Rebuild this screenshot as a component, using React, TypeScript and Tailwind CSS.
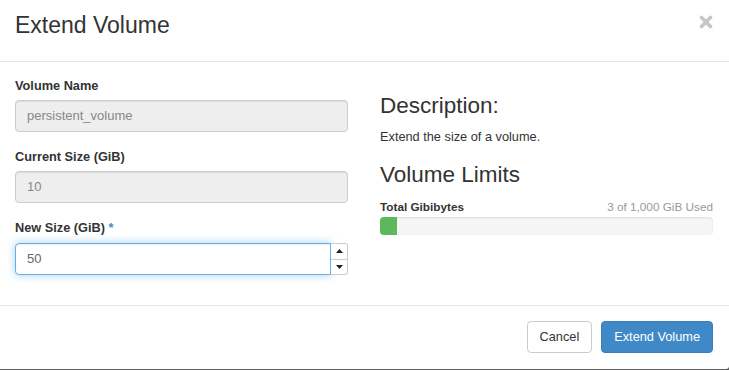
export default function App() {
  return (
    <div className="h-[370px] w-[729px] overflow-hidden bg-[#5e5e5e] font-['Liberation_Sans',Arial,sans-serif] text-[#333]">
      <div className="flex h-[369px] flex-col rounded-br-[3px] bg-white">
        {/* Header */}
        <div className="flex h-[62px] shrink-0 items-start justify-between border-b border-[#e5e5e5] pl-[15px] pr-[16px] pt-[13px]">
          <h4 className="text-[23px] font-normal leading-[25px]">Extend Volume</h4>
          <button className="mt-[2px] h-[14px] w-[14px]" aria-label="Close">
            <svg width="14" height="14" viewBox="0 0 14 14">
              <path d="M2.5 2.5 L11.5 11.5 M11.5 2.5 L2.5 11.5" stroke="#c6c6c6" strokeWidth="3.6" strokeLinecap="round" />
            </svg>
          </button>
        </div>

        {/* Body */}
        <div className="flex shrink-0 gap-[32px] px-[15px] pb-[15px] pt-[15px]">
          <div className="flex w-[333px] flex-col">
            <div className="mb-[16px]">
              <label className="mb-[6px] block text-[12.75px] font-bold leading-[17px]">Volume Name</label>
              <div className="flex h-[32px] items-center rounded-[4px] border border-[#ccc] bg-[#eee] px-[11px] text-[13px] text-[#888] shadow-[inset_0_1px_1px_rgba(0,0,0,0.075)]">
                persistent_volume
              </div>
            </div>
            <div className="mb-[16px]">
              <label className="mb-[6px] block text-[12.75px] font-bold leading-[17px]">Current Size (GiB)</label>
              <div className="flex h-[32px] items-center rounded-[4px] border border-[#ccc] bg-[#eee] px-[11px] text-[13px] text-[#888] shadow-[inset_0_1px_1px_rgba(0,0,0,0.075)]">
                10
              </div>
            </div>
            <div className="mb-[15px]">
              <label className="mb-[7px] block text-[12.75px] font-bold leading-[17px]">
                New Size (GiB) <span className="text-[#428bca]">*</span>
              </label>
              <div className="flex h-[32px]">
                <div className="flex flex-1 items-center rounded-l-[4px] border border-[#66afe9] bg-white px-[11px] text-[13px] text-[#666] shadow-[inset_0_1px_1px_rgba(0,0,0,0.075),0_0_8px_rgba(102,175,233,0.6)]">
                  50
                </div>
                <div className="flex w-[17px] flex-col rounded-r-[3px] border border-l-0 border-[#ccc] bg-white">
                  <div className="flex flex-1 items-center justify-center border-b border-[#ccc]">
                    <svg width="7" height="4" viewBox="0 0 7 4"><path d="M3.5 0 L7 4 L0 4 Z" fill="#222" /></svg>
                  </div>
                  <div className="flex flex-1 items-center justify-center">
                    <svg width="7" height="4" viewBox="0 0 7 4"><path d="M0 0 L7 0 L3.5 4 Z" fill="#222" /></svg>
                  </div>
                </div>
              </div>
            </div>
          </div>

          <div className="flex w-[333px] flex-col">
            <h3 className="mt-[16px] text-[22.5px] font-normal leading-[25px]">Description:</h3>
            <p className="mt-[10px] text-[12.75px] leading-[18px]">Extend the size of a volume.</p>
            <h3 className="mt-[16px] text-[22.5px] font-normal leading-[25px]">Volume Limits</h3>
            <div className="mt-[12px] flex justify-between text-[11.75px] leading-[16px]">
              <span className="font-bold">Total Gibibytes</span>
              <span className="text-[#999]">3 of 1,000 GiB Used</span>
            </div>
            <div className="mt-[2px] h-[18px] overflow-hidden rounded-[4px] bg-[#f5f5f5] shadow-[inset_0_1px_2px_rgba(0,0,0,0.1)]">
              <div className="h-full bg-[#5cb85c]" style={{ width: 17 }} />
            </div>
          </div>
        </div>

        {/* Footer */}
        <div className="flex flex-1 items-start justify-end gap-[9px] border-t border-[#e5e5e5] px-[16px] pt-[15px]">
          <button className="flex h-[32px] items-center rounded-[4px] border border-[#ccc] bg-white px-[12px] text-[12.75px] text-[#333]">
            Cancel
          </button>
          <button className="flex h-[32px] items-center rounded-[4px] border border-[#3a80bd] bg-[#3f89c7] px-[12px] text-[12.75px] text-white">
            Extend Volume
          </button>
        </div>
      </div>
    </div>
  );
}
